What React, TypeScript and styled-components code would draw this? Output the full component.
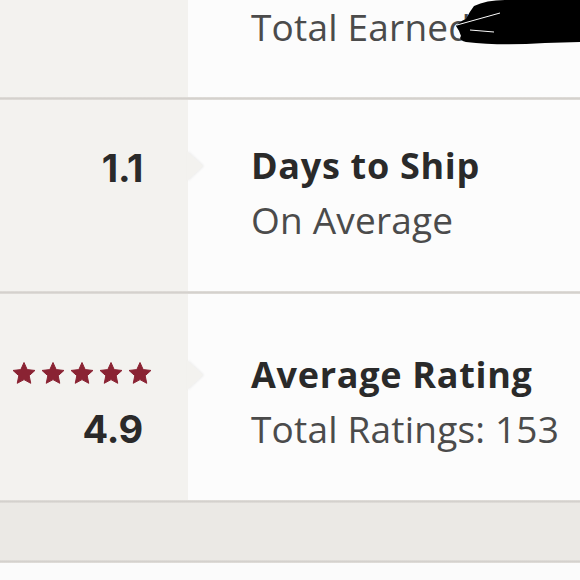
import React from "react";
import styled, { createGlobalStyle } from "styled-components";

const GlobalStyle = createGlobalStyle`
  html, body { margin: 0; padding: 0; background: #fbfbfb; }
  body { font-family: "Open Sans", Lato, sans-serif; }
`;

const Page = styled.div`
  width: 580px;
  height: 580px;
  overflow: hidden;
  position: relative;
  background: #fbfbfb;
`;

const Row = styled.div`
  display: grid;
  grid-template-columns: 188px 1fr;
`;

const Side = styled.div<{ $pad: number }>`
  background: #f3f2ef;
  padding: ${(p) => p.$pad}px 45px 0 0;
  display: flex;
  flex-direction: column;
  align-items: flex-end;
`;

const Main = styled.div<{ $pad: number; $bottom: number; $arrow?: boolean }>`
  position: relative;
  padding: ${(p) => p.$pad}px 0 ${(p) => p.$bottom}px 63px;
  background: #fcfcfc;
  &::before {
    content: "";
    display: ${(p) => (p.$arrow ? "block" : "none")};
    position: absolute;
    left: -1px;
    top: ${(p) => p.$pad + 12}px;
    width: 0;
    height: 0;
    border-top: 15px solid transparent;
    border-bottom: 15px solid transparent;
    border-left: 16px solid #f3f2ef;
    filter: drop-shadow(1px 0 1px rgba(0, 0, 0, 0.07));
  }
`;

const Title = styled.div`
  font-weight: 700;
  font-size: 36px;
  line-height: 54px;
  letter-spacing: 0.7px;
  color: #2a2a2a;
  white-space: nowrap;
`;

const Sub = styled.div`
  font-weight: 400;
  font-size: 37px;
  line-height: 54px;
  letter-spacing: 0.2px;
  color: #4b4b4b;
  white-space: nowrap;
`;

const Value = styled.div<{ $gap?: number }>`
  font-family: Inter, "Open Sans", sans-serif;
  font-variant-numeric: proportional-nums;
  font-weight: 700;
  font-size: 38px;
  line-height: 60px;
  letter-spacing: -0.3px;
  color: #2a2a2a;
  margin-top: ${(p) => p.$gap ?? 0}px;
`;

const Stars = styled.svg`
  display: block;
  margin-right: -9px;
`;

const Divider = styled.div`
  height: 3px;
  background: linear-gradient(#e2dfdb, #d4d1cd 50%, #e2dfdb);
`;

const Band = styled.div`
  height: 57px;
  background: #ebe9e5;
`;

const Redaction = styled.svg`
  position: absolute;
  left: 0;
  top: 0;
  pointer-events: none;
`;

const STAR =
  "11,0.5 14.2,7.6 21.94,8.45 16.2,13.7 17.76,21.3 11,17.6 4.24,21.3 5.8,13.7 0.06,8.45 7.8,7.6";

function StarRow() {
  return (
    <Stars width="139" height="22" viewBox="0 0 139 22">
      {[0, 29, 58, 87, 116].map((x) => (
        <polygon
          key={x}
          points={STAR}
          transform={`translate(${x} 0)`}
          fill="#8a2333"
          stroke="#8a2333"
          strokeWidth="1"
          strokeLinejoin="round"
        />
      ))}
    </Stars>
  );
}

export default function App() {
  return (
    <Page>
      <GlobalStyle />
      <Row>
        <Side $pad={0} />
        <Main $pad={0} $bottom={43}>
          <Sub>Total Earned</Sub>
        </Main>
      </Row>
      <Divider />
      <Row>
        <Side $pad={38}>
          <Value>1.1</Value>
        </Side>
        <Main $pad={39} $bottom={44} $arrow>
          <Title>Days to Ship</Title>
          <Sub>On Average</Sub>
        </Main>
      </Row>
      <Divider />
      <Row>
        <Side $pad={68}>
          <StarRow />
          <Value $gap={15}>4.9</Value>
        </Side>
        <Main $pad={54} $bottom={44} $arrow>
          <Title>Average Rating</Title>
          <Sub>Total Ratings: 153</Sub>
        </Main>
      </Row>
      <Divider />
      <Band />
      <Divider />
      <Redaction width="580" height="60" viewBox="0 0 580 60">
        <path
          d="M474 6 Q486 0 505 0 L580 0 L580 42 L545 43 Q500 46 466 42 Q458 40 461 36 Q459 30 456 26 Q460 21 466 19 Q470 11 474 6 Z"
          fill="#000"
        />
        <path d="M457 25 L500 13 M470 30 L494 32" stroke="#fcfcfc" strokeWidth="1" fill="none" />
      </Redaction>
    </Page>
  );
}
